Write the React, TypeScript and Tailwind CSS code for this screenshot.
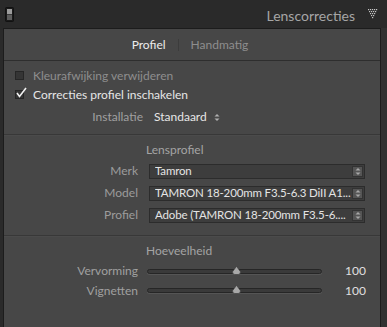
import React from "react";

const font = { fontFamily: 'Lato, "Open Sans", sans-serif' };

function PowerSwitch() {
  return (
    <svg width="9" height="15" viewBox="0 0 9 15" className="block">
      <rect x="0.5" y="0.5" width="8" height="14" rx="1" fill="#1a1a1a" stroke="#111" />
      <rect x="2" y="2" width="5" height="5" fill="#9c9c9c" />
      <rect x="2" y="7" width="5" height="6" fill="#5e5e5e" />
      <rect x="2" y="7" width="5" height="1" fill="#3a3a3a" />
    </svg>
  );
}

function DottedTriangle() {
  const dots: [number, number][] = [];
  for (let r = 0; r < 5; r++) {
    for (let c = 0; c < 5 - r; c++) {
      dots.push([r + c * 2, r * 2]);
    }
  }
  return (
    <svg width="10" height="10" viewBox="0 0 10 10" className="block">
      {dots.map(([x, y]) => (
        <rect key={`${x}-${y}`} x={x} y={y} width="1.2" height="1.2" fill="#c4c4c4" />
      ))}
    </svg>
  );
}

function UpDown({ color = "#b0b0b0" }: { color?: string }) {
  return (
    <svg width="6" height="9" viewBox="0 0 6 9" className="block">
      <path d="M0.5 3.5 L3 1 L5.5 3.5 Z" fill={color} />
      <path d="M0.5 5.5 L3 8 L5.5 5.5 Z" fill={color} />
    </svg>
  );
}

function Checkbox({ checked }: { checked?: boolean }) {
  return (
    <span className="relative block h-[9px] w-[9px] border border-[#262626] bg-[#353535]">
      {checked ? (
        <svg width="12" height="12" viewBox="0 0 12 12" className="absolute left-[0px] top-[-4px]">
          <path d="M1 6 L3.5 9.5 L10 1" fill="none" stroke="#f2f2f2" strokeWidth="1.6" />
        </svg>
      ) : null}
    </span>
  );
}

function Divider() {
  return <div className="h-[2px] border-t border-[#383838] bg-[#4b4b4b]" />;
}

function SelectRow({ label, value }: { label: string; value: string }) {
  return (
    <div className="flex h-[22px] items-center">
      <span className="w-[134px] text-right text-[#9c9c9c]">{label}</span>
      <div className="ml-[11px] flex h-[15px] w-[216px] items-center border border-[#2c2c2c] bg-[#3d3d3d] pl-[5px] pr-[1px]">
        <span className="min-w-0 flex-1 overflow-hidden whitespace-nowrap text-[11.5px] leading-[14px] tracking-[-0.15px] text-[#e4e4e4]">
          {value}
        </span>
        <span className="flex h-[11px] w-[11px] shrink-0 items-center justify-center border border-[#333] bg-[#555]">
          <UpDown color="#a8a8a8" />
        </span>
      </div>
    </div>
  );
}

function SliderRow({ label, value, pos, h }: { label: string; value: string; pos: number; h: string }) {
  return (
    <div className={`flex items-center ${h}`}>
      <span className="w-[134px] text-right text-[#a0a0a0]">{label}</span>
      <div className="relative ml-[9px] h-[5px] w-[175px] rounded-full border border-[#262626] bg-[#3a3a3a] shadow-[0_1px_0_#555]">
        <svg width="9" height="9" viewBox="0 0 9 9" className="absolute top-[-4px]" style={{ left: pos - 4 }}>
          <path d="M4.5 0.3 L8.5 5.8 Q8.5 8.5 6.2 8.5 L2.8 8.5 Q0.5 8.5 0.5 5.8 Z" fill="#a8a8a8" stroke="#333" strokeWidth="0.6" />
        </svg>
      </div>
      <span className="ml-auto mr-[14px] text-[#e0e0e0]">{value}</span>
    </div>
  );
}

export default function App() {
  return (
    <div className="flex h-[327px] w-[387px] flex-col overflow-hidden bg-[#2a2a2a] text-[12px] leading-none" style={font}>
      <header className="flex h-[28px] items-center pl-[5px] pr-[9px] pt-[3px]">
        <span className="-mt-[3px]">
          <PowerSwitch />
        </span>
        <span className="ml-auto text-[14px] text-[#a6a6a6]">Lenscorrecties</span>
        <span className="ml-[13px] -mt-[3px]">
          <DottedTriangle />
        </span>
      </header>

      <div className="flex flex-1">
        <div className="w-[3px]" />
        <section className="flex-1 border-x border-t border-[#1c1c1c] bg-[#474747]">
          <div className="flex h-[32px] items-center justify-center gap-[12px] border-b border-[#2e2e2e] pr-[4px]">
            <span className="text-[#ececec]">Profiel</span>
            <span className="h-[12px] w-px bg-[#3c3c3c]" />
            <span className="text-[#8e8e8e]">Handmatig</span>
          </div>

          <div className="pt-[5px] pb-[4px]">
            <div className="flex h-[19px] items-center gap-[9px] pl-[11px]">
              <Checkbox />
              <span className="text-[#8e8e8e]">Kleurafwijking verwijderen</span>
            </div>
            <div className="flex h-[19px] items-center gap-[9px] pl-[11px]">
              <Checkbox checked />
              <span className="text-[#e6e6e6]">Correcties profiel inschakelen</span>
            </div>
            <div className="flex h-[26px] items-center">
              <span className="w-[139px] text-right text-[#a0a0a0]">Installatie</span>
              <span className="ml-[11px] text-[#e6e6e6]">Standaard</span>
              <span className="ml-[7px]">
                <UpDown />
              </span>
            </div>
          </div>

          <Divider />

          <div className="pt-[4px] pb-[9px]">
            <div className="flex h-[20px] items-center pl-[142px] text-[#a4a4a4]">Lensprofiel</div>
            <SelectRow label="Merk" value="Tamron" />
            <SelectRow label="Model" value="TAMRON 18-200mm F3.5-6.3 DiII A1..." />
            <SelectRow label="Profiel" value="Adobe (TAMRON 18-200mm F3.5-6...." />
          </div>

          <Divider />

          <div className="pt-[4px]">
            <div className="flex h-[20px] items-center pl-[142px] text-[#a4a4a4]">Hoeveelheid</div>
            <SliderRow label="Vervorming" value="100" pos={88} h="h-[20px]" />
            <SliderRow label="Vignetten" value="100" pos={88} h="h-[19px]" />
          </div>
        </section>
        <div className="w-[6px] bg-[#313131]" />
      </div>
    </div>
  );
}
